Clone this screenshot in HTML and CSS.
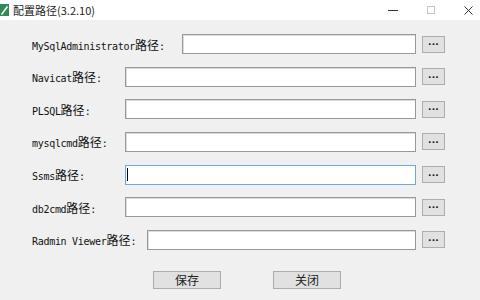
FILE: index.html
```html
<!DOCTYPE html>
<html>
	<head>
		<meta charset="UTF-8">
		<title>配置路径(3.2.10)</title>
		<link rel="stylesheet" href="styles.css">
	</head>
	<body>

		<div class="window">

			<!--标题栏-->
			<div class="titlebar">
				<svg class="app-icon" viewBox="0 0 9 12">
					<rect x="0" y="0" width="9" height="12" fill="#2f8a55"/>
					<path d="M1.5 10.5 L7.5 2.5" stroke="#fff" stroke-width="1.6"/>
				</svg>
				<span class="title">配置路径(3.2.10)</span>
				<div class="controls">
					<svg class="ctrl-min" viewBox="0 0 10 10"><path d="M0 5.5 H10" stroke="#333" stroke-width="1"/></svg>
					<svg class="ctrl-max" viewBox="0 0 8 8"><rect x="0.5" y="0.5" width="7" height="7" fill="none" stroke="#c6c6c6"/></svg>
					<svg class="ctrl-close" viewBox="0 0 9 9"><path d="M0.5 0.5 L8.5 8.5 M8.5 0.5 L0.5 8.5" stroke="#333" stroke-width="1"/></svg>
				</div>
			</div>

			<!--路径设置-->
			<div class="form">
				<div class="row">
					<span class="label wide">MySqlAdministrator<span class="cn">路径</span>:</span>
					<div class="field"></div>
					<button class="browse">···</button>
				</div>
				<div class="row">
					<span class="label">Navicat<span class="cn">路径</span>:</span>
					<div class="field"></div>
					<button class="browse">···</button>
				</div>
				<div class="row">
					<span class="label">PLSQL<span class="cn">路径</span>:</span>
					<div class="field"></div>
					<button class="browse">···</button>
				</div>
				<div class="row">
					<span class="label">mysqlcmd<span class="cn">路径</span>:</span>
					<div class="field"></div>
					<button class="browse">···</button>
				</div>
				<div class="row">
					<span class="label">Ssms<span class="cn">路径</span>:</span>
					<div class="field focus"><span class="caret"></span></div>
					<button class="browse">···</button>
				</div>
				<div class="row">
					<span class="label">db2cmd<span class="cn">路径</span>:</span>
					<div class="field"></div>
					<button class="browse">···</button>
				</div>
				<div class="row">
					<span class="label mid">Radmin Viewer<span class="cn">路径</span>:</span>
					<div class="field"></div>
					<button class="browse">···</button>
				</div>
			</div>

			<!--底部按钮-->
			<div class="actions">
				<button class="btn">保存</button>
				<button class="btn">关闭</button>
			</div>

		</div>

	</body>
</html>
```

FILE: styles.css
```css
*{
	margin: 0;
	padding: 0;
	box-sizing: border-box;
}

body{
	width: 480px;
	height: 300px;
	overflow: hidden;
	background-color: #f0f0f0;
	font-family: "DejaVu Sans Mono", monospace;
}

.window{
	width: 480px;
	height: 300px;
}

/*标题栏*/
.titlebar{
	height: 20px;
	background-color: #fff;
	display: flex;
	align-items: center;
}

.app-icon{
	width: 9px;
	height: 12px;
	margin-right: 4px;
}

.title{
	font-family: "Noto Sans CJK SC", sans-serif;
	font-size: 11px;
	color: #1a1a1a;
}

.controls{
	margin-left: auto;
	padding-right: 7px;
	display: flex;
	align-items: center;
	gap: 29px;
}

.ctrl-min{
	width: 10px;
	height: 10px;
}

.ctrl-max{
	width: 8px;
	height: 8px;
}

.ctrl-close{
	width: 9px;
	height: 9px;
}

/*表单*/
.form{
	padding: 14px 35px 0 32px;
	display: flex;
	flex-direction: column;
	gap: 12.67px;
}

.row{
	height: 20px;
	display: flex;
	align-items: center;
}

.label{
	flex: none;
	width: 93px;
	font-size: 10px;
	letter-spacing: -0.3px;
	color: #111;
	white-space: nowrap;
}

.label.wide{
	width: 150px;
}

.label.mid{
	width: 115px;
}

.cn{
	font-family: "Noto Sans CJK SC", sans-serif;
	font-size: 12px;
	letter-spacing: 0;
}

.field{
	flex: 1;
	height: 20px;
	background-color: #fff;
	border: 1px solid #999;
	box-shadow: inset 1px 1px 0 #dcdcdc;
	display: flex;
	align-items: center;
}

/*获得焦点的输入框*/
.field.focus{
	border-color: #6fa8e0;
	box-shadow: none;
}

.caret{
	width: 1px;
	height: 13px;
	margin-left: 1px;
	background-color: #000;
}

.browse{
	flex: none;
	width: 23px;
	height: 17px;
	margin-left: 6px;
	background-color: #e1e1e1;
	border: 1px solid #adadad;
	font-family: "DejaVu Sans", sans-serif;
	font-size: 9px;
	font-weight: bold;
	letter-spacing: 0.3px;
	color: #111;
	display: flex;
	align-items: center;
	justify-content: center;
}

/*底部按钮*/
.actions{
	padding: 21px 0 0 153px;
	display: flex;
	gap: 52px;
}

.btn{
	width: 68px;
	height: 18px;
	background-color: #e1e1e1;
	border: 1px solid #adadad;
	font-family: "Noto Sans CJK SC", sans-serif;
	font-size: 12px;
	line-height: 16px;
	color: #222;
}
```
